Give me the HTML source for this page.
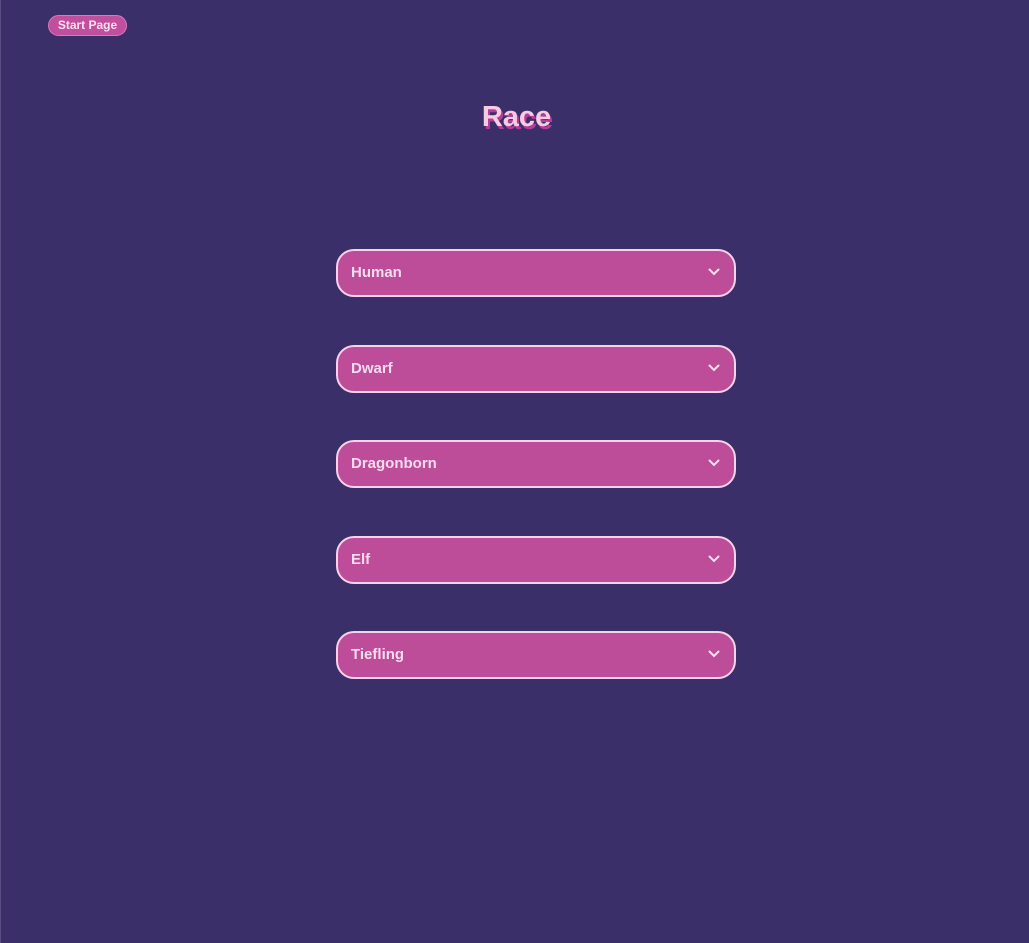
<!DOCTYPE html>
<html><head><style>
html,body{margin:0;padding:0}
body{width:1029px;height:943px;background:#3b2f69;position:relative;overflow:hidden;font-family:"Liberation Sans",sans-serif;box-shadow:inset 1px 0 0 #5a4b80}
.sp{position:absolute;left:48px;top:15px;width:79px;height:21px;border-radius:11px;background:#c04f9e;border:1px solid #d979b8;box-sizing:border-box;color:#fbe0ef;font-size:12px;font-weight:bold;line-height:19px;text-align:center}
h1{position:absolute;left:2px;width:1029px;top:101px;margin:0;text-align:center;font-size:29px;font-weight:bold;color:#f7cbe2;text-shadow:2px 3px 0 #b53d97}
.s{position:absolute;left:336px;width:400px;height:48px;box-sizing:border-box;border:2px solid #f6d3ea;border-radius:18px;background:#bd4d99;color:#f8dcee;font-size:15px;font-weight:bold;line-height:44px;padding-left:13px}
.s svg{position:absolute;right:14px;top:17px}
</style></head><body>
<div class="sp">Start Page</div>
<h1>Race</h1>
<div class="s" style="top:249px">Human<svg width="12" height="8" viewBox="0 0 12 8"><path d="M1.5 1.5L6 6l4.5-4.5" stroke="#f8e0ef" stroke-width="2" fill="none" stroke-linecap="round"/></svg></div>
<div class="s" style="top:345px">Dwarf<svg width="12" height="8" viewBox="0 0 12 8"><path d="M1.5 1.5L6 6l4.5-4.5" stroke="#f8e0ef" stroke-width="2" fill="none" stroke-linecap="round"/></svg></div>
<div class="s" style="top:440px">Dragonborn<svg width="12" height="8" viewBox="0 0 12 8"><path d="M1.5 1.5L6 6l4.5-4.5" stroke="#f8e0ef" stroke-width="2" fill="none" stroke-linecap="round"/></svg></div>
<div class="s" style="top:536px">Elf<svg width="12" height="8" viewBox="0 0 12 8"><path d="M1.5 1.5L6 6l4.5-4.5" stroke="#f8e0ef" stroke-width="2" fill="none" stroke-linecap="round"/></svg></div>
<div class="s" style="top:631px">Tiefling<svg width="12" height="8" viewBox="0 0 12 8"><path d="M1.5 1.5L6 6l4.5-4.5" stroke="#f8e0ef" stroke-width="2" fill="none" stroke-linecap="round"/></svg></div>
</body></html>
